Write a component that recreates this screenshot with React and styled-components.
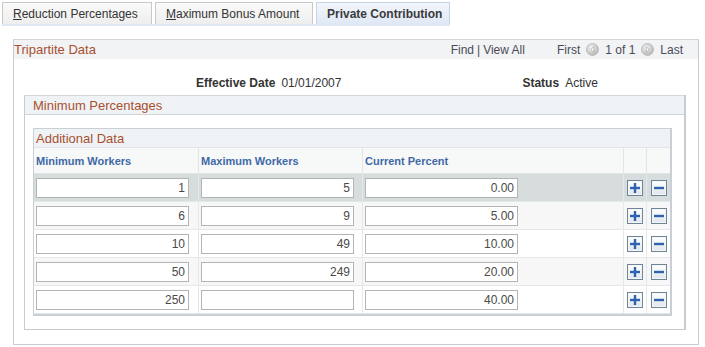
import React from "react";
import styled, { createGlobalStyle } from "styled-components";

const GlobalStyle = createGlobalStyle`
  html, body {
    margin: 0;
    padding: 0;
    background: #ffffff;
    font-family: "Liberation Sans", Arial, sans-serif;
    color: #333333;
  }
`;

const rows = [
  { min: "1", max: "5", pct: "0.00" },
  { min: "6", max: "9", pct: "5.00" },
  { min: "10", max: "49", pct: "10.00" },
  { min: "50", max: "249", pct: "20.00" },
  { min: "250", max: "", pct: "40.00" },
];

const tabs = [
  { label: "Reduction Percentages", key: "R", width: 150 },
  { label: "Maximum Bonus Amount", key: "M", width: 158 },
  { label: "Private Contribution", width: 134, active: true },
];

const columns = [
  { label: "Minimum Workers", width: 165 },
  { label: "Maximum Workers", width: 164 },
  { label: "Current Percent", width: 261 },
  { label: "", width: 23 },
  { label: "", width: 23, last: true },
];

export default function App() {
  return (
    <Page>
      <GlobalStyle />
      <TabBar>
        {tabs.map((t) => (
          <Tab key={t.label} $width={t.width} $active={t.active}>
            {t.key ? (
              <>
                <u>{t.key}</u>
                {t.label.slice(1)}
              </>
            ) : (
              t.label
            )}
          </Tab>
        ))}
      </TabBar>

      <OuterBox>
        <OuterHeader>
          <Title>Tripartite Data</Title>
          <Nav>
            <NavLink>Find</NavLink>
            <Sep>|</Sep>
            <NavLink>View All</NavLink>
            <Pager>
              <NavLink>First</NavLink>
              <ArrowIcon dir="left" />
              <NavLink>1 of 1</NavLink>
              <ArrowIcon dir="right" />
              <NavLink>Last</NavLink>
            </Pager>
          </Nav>
        </OuterHeader>

        <FieldRow>
          <Field $left={182}>
            <Label>Effective Date</Label>
            <Value>01/01/2007</Value>
          </Field>
          <Field $left={181}>
            <Label>Status</Label>
            <Value>Active</Value>
          </Field>
        </FieldRow>

        <InnerBox>
          <InnerHeader>Minimum Percentages</InnerHeader>
          <Grid>
            <colgroup>
              {columns.map((c, i) => (
                <col key={i} style={{ width: c.width }} />
              ))}
            </colgroup>
            <thead>
              <tr>
                <GridTitle colSpan={5}>Additional Data</GridTitle>
              </tr>
              <tr>
                {columns.map((c, i) => (
                  <ColHead key={i} $last={c.last}>
                    {c.label}
                  </ColHead>
                ))}
              </tr>
            </thead>
            <tbody>
              {rows.map((r, i) => (
                <Row key={i} $shade={i === 0 ? "sel" : i % 2 ? "alt" : "plain"}>
                  <Cell>
                    <NumInput readOnly value={r.min} />
                  </Cell>
                  <Cell>
                    <NumInput readOnly value={r.max} />
                  </Cell>
                  <Cell>
                    <NumInput readOnly value={r.pct} />
                  </Cell>
                  <BtnCell>
                    <RowButton aria-label="Add row">
                      <svg width="10" height="10" viewBox="0 0 10 10">
                        <rect x="3.8" y="0" width="2.4" height="10" fill="#2f63b0" />
                        <rect x="0" y="3.8" width="10" height="2.4" fill="#2f63b0" />
                      </svg>
                    </RowButton>
                  </BtnCell>
                  <BtnCell $last>
                    <RowButton aria-label="Delete row">
                      <svg width="10" height="10" viewBox="0 0 10 10">
                        <rect x="0" y="3.8" width="10" height="2.4" fill="#2f63b0" />
                      </svg>
                    </RowButton>
                  </BtnCell>
                </Row>
              ))}
            </tbody>
          </Grid>
        </InnerBox>
      </OuterBox>
    </Page>
  );
}

function ArrowIcon({ dir }) {
  return (
    <svg width="13" height="13" viewBox="0 0 13 13">
      <defs>
        <radialGradient id={`g-${dir}`} cx="40%" cy="35%" r="70%">
          <stop offset="0%" stopColor="#f6f6f6" />
          <stop offset="100%" stopColor="#b0b0b0" />
        </radialGradient>
      </defs>
      <circle cx="6.5" cy="6.5" r="6" fill={`url(#g-${dir})`} stroke="#bdbdbd" />
      {dir === "left" ? (
        <polygon points="7.8,3.8 4.8,6.5 7.8,9.2" fill="#ffffff" stroke="#999999" strokeWidth="0.6" />
      ) : (
        <polygon points="5.2,3.8 8.2,6.5 5.2,9.2" fill="#ffffff" stroke="#999999" strokeWidth="0.6" />
      )}
    </svg>
  );
}

const Page = styled.div`
  width: 705px;
  height: 347px;
  padding: 2px 0 0 2px;
  box-sizing: border-box;
  overflow: hidden;
`;

const TabBar = styled.div`
  display: flex;
  gap: 3px;
  height: 22px;
  border-bottom: 2px solid #dfe8f4;
  width: 448px;
`;

const Tab = styled.div`
  width: ${(p) => p.$width}px;
  box-sizing: border-box;
  height: 22px;
  display: flex;
  align-items: center;
  white-space: nowrap;
  padding-left: 10px;
  font-size: 12px;
  font-weight: ${(p) => (p.$active ? "bold" : "normal")};
  color: ${(p) => (p.$active ? "#3a3a3a" : "#333333")};
  border: 1px solid ${(p) => (p.$active ? "#c8d3e2" : "#c9c9c9")};
  border-bottom: none;
  background: ${(p) =>
    p.$active
      ? "linear-gradient(#f2f6fc, #dfe8f5)"
      : "linear-gradient(#fafafa, #eeeeee)"};

  u {
    text-decoration: underline;
  }
`;

const OuterBox = styled.div`
  margin: 13px 0 0 11px;
  width: 686px;
  height: 306px;
  box-sizing: border-box;
  border: 1px solid #c7ccd2;
  border-top-color: #d2d6db;
`;

const OuterHeader = styled.div`
  height: 19px;
  background: #f1f3f5;
  display: flex;
  align-items: center;
  justify-content: space-between;
`;

const Title = styled.div`
  font-size: 13px;
  color: #a84f2f;
`;

const Nav = styled.div`
  display: flex;
  align-items: center;
  font-size: 12px;
  padding-right: 15px;
`;

const NavLink = styled.span`
  color: #4b4b57;
`;

const Sep = styled.span`
  margin: 0 3px;
  color: #4b4b57;
`;

const Pager = styled.span`
  display: flex;
  align-items: center;
  gap: 6px;
  margin-left: 32px;
`;

const FieldRow = styled.div`
  display: flex;
  align-items: center;
  height: 18px;
  margin-top: 15px;
  font-size: 12px;
`;

const Field = styled.div`
  margin-left: ${(p) => p.$left}px;
  display: flex;
  gap: 6px;
`;

const Label = styled.span`
  font-weight: bold;
  color: #333333;
`;

const Value = styled.span`
  color: #333333;
`;

const InnerBox = styled.div`
  margin: 3px 0 0 10px;
  width: 662px;
  height: 235px;
  box-sizing: border-box;
  border: 1px solid #c7ccd2;
  border-top: none;
  border-right-width: 2px;
`;

const InnerHeader = styled.div`
  height: 20px;
  background: #f0f3f5;
  border-top: 1px solid #d3d8dd;
  border-bottom: 1px solid #d0d5da;
  box-sizing: border-box;
  display: flex;
  align-items: center;
  padding-left: 8px;
  font-size: 13px;
  color: #a84f2f;
`;

const Grid = styled.table`
  margin: 13px 0 0 8px;
  table-layout: fixed;
  border-collapse: separate;
  border-spacing: 0;
  border-style: solid;
  border-color: #c9cfd5;
  border-width: 1px 2px 2px 1px;
  width: 639px;
  font-size: 12px;

  th,
  td {
    box-sizing: border-box;
  }
`;

const GridTitle = styled.th`
  height: 19px;
  padding: 0 0 0 2px;
  background: #eff3f5;
  text-align: left;
  font-weight: normal;
  font-size: 13px;
  color: #a84f2f;
  border-bottom: 1px solid #e1e5e8;
`;

const ColHead = styled.th`
  height: 26px;
  padding: 0 0 0 2px;
  background: #f7f8f8;
  text-align: left;
  font-size: 11px;
  font-weight: bold;
  color: #3f69a6;
  border-right: ${(p) => (p.$last ? "none" : "1px solid #e1e5e8")};
  border-bottom: 1px solid #e1e5e8;
`;

const shades = { sel: "#d6dddc", alt: "#f7f7f7", plain: "#ffffff" };

const Row = styled.tr`
  background: ${(p) => shades[p.$shade]};
  height: 28px;
`;

const Cell = styled.td`
  padding: 0 0 0 2px;
  border-right: ${(p) => (p.$last ? "none" : "1px solid #e4e8ea")};
  border-bottom: 1px solid #e4e8ea;
`;

const BtnCell = styled(Cell)`
  padding: 0;
  text-align: center;
`;

const NumInput = styled.input`
  display: block;
  width: 153px;
  height: 20px;
  box-sizing: border-box;
  border: 1px solid #b4b4b4;
  background: #ffffff;
  font-family: "Liberation Sans", Arial, sans-serif;
  font-size: 12px;
  color: #4a4a4a;
  text-align: right;
  padding: 0 3px 0 0;
  outline: none;
`;

const RowButton = styled.button`
  width: 16px;
  height: 16px;
  padding: 0;
  margin: 0 auto;
  display: flex;
  align-items: center;
  justify-content: center;
  border: 1px solid #6f8494;
  background: linear-gradient(#ffffff, #dfe6ec);
  box-shadow: inset 0 0 0 1px #f4f7fa;
  cursor: pointer;
`;
